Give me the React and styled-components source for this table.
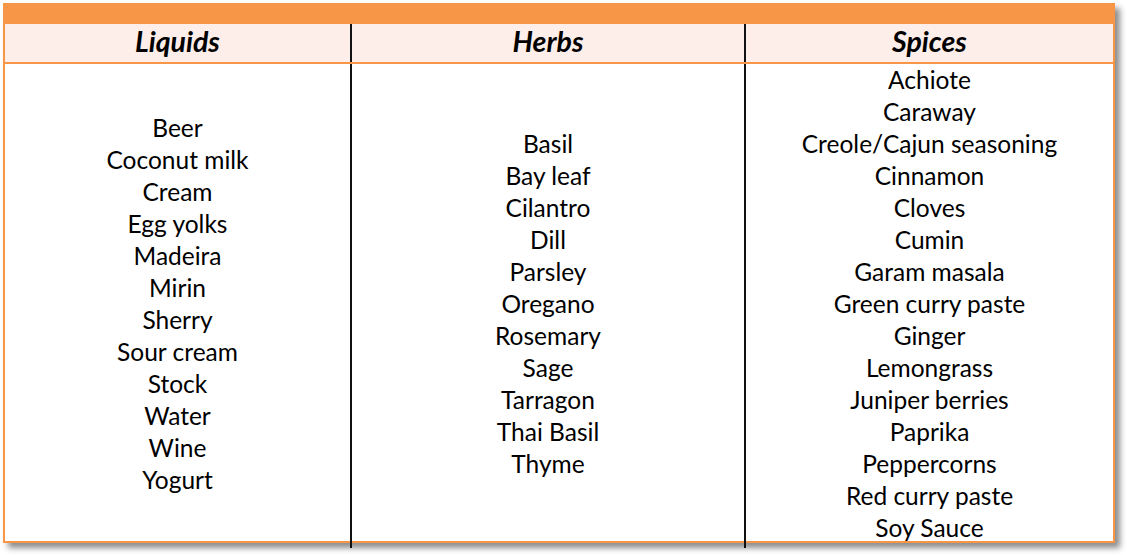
import React from 'react';
import styled, {createGlobalStyle} from 'styled-components';

const Global = createGlobalStyle`
  html, body {
    margin: 0;
    padding: 0;
    background: #ffffff;
  }
  body {
    font-family: Lato, "Open Sans", sans-serif;
    color: #000;
  }
`;

const Page = styled.div`
  width: 1127px;
  height: 557px;
  padding: 3px 0 0 3px;
  box-sizing: border-box;
`;

const Table = styled.div`
  width: 1112px;
  border: 2px solid #f79646;
  border-top: 0;
  box-sizing: border-box;
  background: #fff;
  box-shadow: 5px 5px 6px rgba(0, 0, 0, 0.45);
`;

const Band = styled.div`
  height: 21px;
  background: #f79646;
`;

const Row = styled.div`
  display: grid;
  grid-template-columns: 345px 394px 1fr;
  height: ${p => p.h}px;
  background: ${p => p.bg || '#fff'};
  border-bottom: ${p => (p.line ? '2px solid #f79646' : '0')};
`;

const Cell = styled.div`
  display: flex;
  flex-direction: column;
  align-items: center;
  justify-content: center;
  padding-bottom: ${p => p.lift || 0}px;
  border-left: ${p => (p.first ? '0' : '2px solid #111')};
`;

const Head = styled.span`
  font-size: 28.5px;
  font-weight: 700;
  font-style: italic;
  line-height: 34px;
`;

const Item = styled.span`
  font-size: 24.5px;
  line-height: 32px;
`;

const columns = [
    {
        title: 'Liquids',
        items: ['Beer', 'Coconut milk', 'Cream', 'Egg yolks', 'Madeira', 'Mirin', 'Sherry',
            'Sour cream', 'Stock', 'Water', 'Wine', 'Yogurt']
    },
    {
        title: 'Herbs',
        items: ['Basil', 'Bay leaf', 'Cilantro', 'Dill', 'Parsley', 'Oregano', 'Rosemary',
            'Sage', 'Tarragon', 'Thai Basil', 'Thyme']
    },
    {
        title: 'Spices',
        items: ['Achiote', 'Caraway', 'Creole/Cajun seasoning', 'Cinnamon', 'Cloves', 'Cumin',
            'Garam masala', 'Green curry paste', 'Ginger', 'Lemongrass', 'Juniper berries',
            'Paprika', 'Peppercorns', 'Red curry paste', 'Soy Sauce']
    }
];

const App = () => (
    <Page>
        <Global/>
        <Table>
            <Band/>
            <Row h={38} bg="#fdeee9" line>
                {columns.map((c, i) => (
                    <Cell key={c.title} first={i === 0} lift={4}>
                        <Head>{c.title}</Head>
                    </Cell>
                ))}
            </Row>
            <Row h={477}>
                {columns.map((c, i) => (
                    <Cell key={c.title} first={i === 0} lift={4}>
                        {c.items.map(it => <Item key={it}>{it}</Item>)}
                    </Cell>
                ))}
            </Row>
        </Table>
    </Page>
);

export default App;
